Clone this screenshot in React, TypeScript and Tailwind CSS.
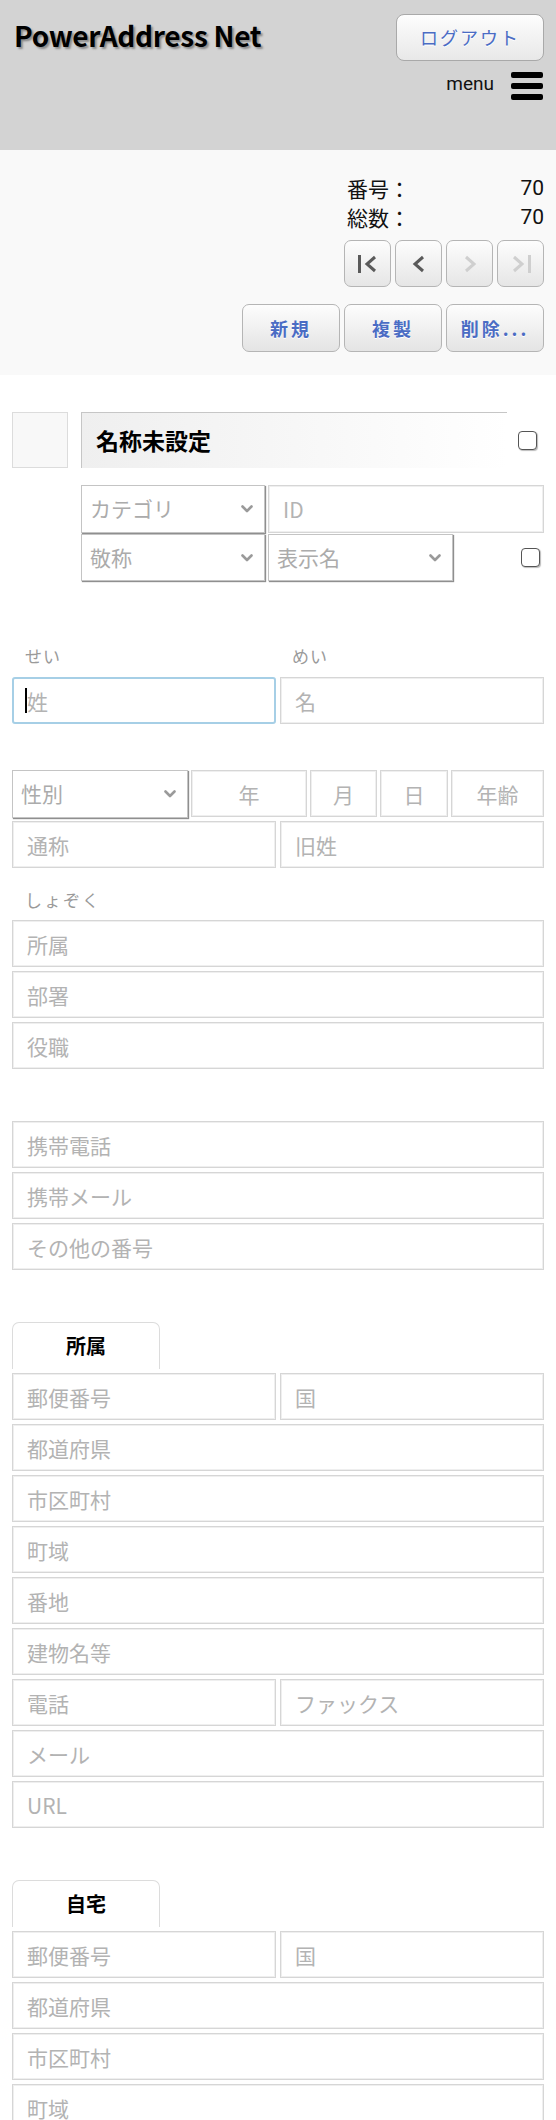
import React from "react";

const inputCls =
  "h-[47px] w-full border border-[#d6d6d6] shadow-[inset_0_0_0_1px_#efefef] bg-white px-[14px] text-[21px] text-[#333] placeholder:text-[#b3b3b3] outline-none";

function Field({ ph, center }: { ph: string; center?: boolean }) {
  return (
    <input
      placeholder={ph}
      className={center ? inputCls + " text-center px-1" : inputCls}
    />
  );
}

function Chevron() {
  return (
    <svg
      width="12"
      height="8"
      viewBox="0 0 12 8"
      className="pointer-events-none absolute right-[12px] top-1/2 -translate-y-1/2"
    >
      <polyline
        points="1.5,1.5 6,6 10.5,1.5"
        fill="none"
        stroke="#9a9a9a"
        strokeWidth="2.6"
        strokeLinecap="round"
        strokeLinejoin="round"
      />
    </svg>
  );
}

function Sel({ label, className }: { label: string; className: string }) {
  return (
    <div className={"relative " + className}>
      <select className="h-full w-full appearance-none border border-[#c4c4c4] bg-white pl-[8px] pr-8 text-[21px] text-[#ababab] shadow-[1px_1px_1px_#8f8f8f] outline-none">
        <option>{label}</option>
      </select>
      <Chevron />
    </div>
  );
}

function Check() {
  return (
    <div className="h-[19px] w-[19px] rounded-[4px] border-[1.5px] border-[#555] bg-white shadow-[1px_1px_1px_#bbb]" />
  );
}

function NavBtn({ kind, enabled }: { kind: "first" | "prev" | "next" | "last"; enabled: boolean }) {
  const c = enabled ? "#5a5a5a" : "#cfcfcf";
  return (
    <button className="flex h-[47px] w-[47px] items-center justify-center rounded-[7px] border border-[#b5b5b5] bg-gradient-to-b from-[#fdfdfd] to-[#e6e6e6]">
      <svg width="22" height="20" viewBox="0 0 22 20">
        {kind === "first" && (
          <>
            <rect x="1" y="1" width="3" height="18" fill={c} />
            <polyline points="18,3 10,10 18,17" fill="none" stroke={c} strokeWidth="3" />
          </>
        )}
        {kind === "prev" && (
          <polyline points="15,3 7,10 15,17" fill="none" stroke={c} strokeWidth="3" />
        )}
        {kind === "next" && (
          <polyline points="7,3 15,10 7,17" fill="none" stroke={c} strokeWidth="3" />
        )}
        {kind === "last" && (
          <>
            <polyline points="4,3 12,10 4,17" fill="none" stroke={c} strokeWidth="3" />
            <rect x="18" y="1" width="3" height="18" fill={c} />
          </>
        )}
      </svg>
    </button>
  );
}

function ActBtn({ label }: { label: string }) {
  return (
    <button className="h-[48px] w-[98px] rounded-[7px] border border-[#b5b5b5] bg-gradient-to-b from-[#fdfdfd] to-[#e4e4e4] text-[18px] font-bold tracking-[3px] text-[#4a6cc4] [text-shadow:0_1px_0_#fff]">
      {label}
    </button>
  );
}

function Tab({ label }: { label: string }) {
  return (
    <div className="flex h-[47px] w-[148px] items-center justify-center rounded-t-[7px] border border-b-0 border-[#dcdcdc] bg-white text-[20px] font-bold text-black">
      {label}
    </div>
  );
}

function AddressBlock({ title }: { title: string }) {
  return (
    <div className="flex flex-col">
      <Tab label={title} />
      <div className="mt-[4px] flex flex-col gap-[4px]">
        <div className="grid grid-cols-2 gap-[4px]">
          <Field ph="郵便番号" />
          <Field ph="国" />
        </div>
        <Field ph="都道府県" />
        <Field ph="市区町村" />
        <Field ph="町域" />
        <Field ph="番地" />
        <Field ph="建物名等" />
        <div className="grid grid-cols-2 gap-[4px]">
          <Field ph="電話" />
          <Field ph="ファックス" />
        </div>
        <Field ph="メール" />
        <Field ph="URL" />
      </div>
    </div>
  );
}

export default function App() {
  return (
    <div className="min-h-[2120px] bg-white font-['Noto_Sans_CJK_JP',sans-serif] text-black">
      {/* Header */}
      <header className="h-[150px] bg-[#d3d3d3] px-3 pt-[14px]">
        <div className="flex items-center justify-between">
          <h1 className="-mt-[6px] pl-[2px] text-[28px] font-bold leading-none tracking-[-0.3px] [text-shadow:2px_2px_2px_#8a8a8a]">
            PowerAddress Net
          </h1>
          <button className="h-[47px] w-[148px] rounded-[8px] border border-[#a9a9a9] bg-gradient-to-b from-[#fdfdfd] to-[#e8e8e8] text-[18px] tracking-[2px] text-[#4a6cc4] [text-shadow:0_1px_0_#fff]">
            ログアウト
          </button>
        </div>
        <div className="mt-[11px] flex items-center justify-end gap-[17px]">
          <span className="-mt-[3px] font-['Roboto',sans-serif] text-[19px] text-[#111]">menu</span>
          <div className="flex h-[28px] w-[33px] flex-col justify-between pr-[1px]">
            <span className="h-[6px] w-full rounded-[2px] bg-black" />
            <span className="h-[6px] w-full rounded-[2px] bg-black" />
            <span className="h-[6px] w-full rounded-[2px] bg-black" />
          </div>
        </div>
      </header>

      {/* Record navigation */}
      <section className="flex h-[225px] flex-col items-end bg-[#f9f9f9] px-3 pt-[24px]">
        <div className="grid w-[197px] grid-cols-[auto_1fr] text-[21px] leading-[29px] text-[#111]">
          <span>番号：</span>
          <span className="text-right font-['Roboto',sans-serif]">70</span>
          <span>総数：</span>
          <span className="text-right font-['Roboto',sans-serif]">70</span>
        </div>
        <div className="mt-[8px] flex gap-[4px]">
          <NavBtn kind="first" enabled />
          <NavBtn kind="prev" enabled />
          <NavBtn kind="next" enabled={false} />
          <NavBtn kind="last" enabled={false} />
        </div>
        <div className="mt-[17px] flex gap-[4px]">
          <ActBtn label="新規" />
          <ActBtn label="複製" />
          <ActBtn label="削除..." />
        </div>
      </section>

      {/* Main form */}
      <main className="px-3 pb-10">
        <div className="flex items-center pt-[37px]">
          <div className="h-[56px] w-[56px] shrink-0 border border-[#dcdcdc] bg-[#f8f8f8]" />
          <div className="ml-[13px] flex h-[56px] w-[426px] items-center border-l border-t border-[#c6c6c6] bg-gradient-to-r from-[#efefef] via-[#f7f7f7] to-white pl-[14px] text-[23px] font-bold">
            名称未設定
          </div>
          <div className="ml-[11px]">
            <Check />
          </div>
        </div>

        <div className="ml-[69px] mt-[17px] flex flex-col gap-[1px]">
          <div className="flex h-[48px] gap-[3px]">
            <Sel label="カテゴリ" className="w-[184px]" />
            <input
              placeholder="ID"
              className="h-[48px] flex-1 border border-[#d6d6d6] shadow-[inset_0_0_0_1px_#efefef] bg-white px-[14px] text-[21px] placeholder:text-[#b3b3b3] outline-none"
            />
          </div>
          <div className="flex h-[47px] items-center gap-[3px]">
            <Sel label="敬称" className="h-[47px] w-[184px]" />
            <Sel label="表示名" className="h-[47px] w-[185px]" />
            <div className="ml-[65px]">
              <Check />
            </div>
          </div>
        </div>

        {/* Name */}
        <div className="mt-[64px] grid grid-cols-2 gap-[4px] text-[17px] leading-[22px] tracking-[1px] text-[#9a9a9a]">
          <span className="pl-[13px]">せい</span>
          <span className="pl-[12px]">めい</span>
        </div>
        <div className="mt-[10px] grid grid-cols-2 gap-[4px]">
          <div className="relative">
            <input
              placeholder="姓"
              className="h-[47px] w-full rounded-[3px] border-2 border-[#a6cfe6] bg-white px-[13px] text-[21px] placeholder:text-[#b3b3b3] outline-none"
            />
            <span className="pointer-events-none absolute left-[13px] top-[11px] h-[25px] w-[1.5px] bg-black" />
          </div>
          <Field ph="名" />
        </div>

        <div className="mt-[46px] flex h-[48px] gap-[3px]">
          <Sel label="性別" className="w-[176px]" />
          <div className="w-[116px]">
            <Field ph="年" center />
          </div>
          <div className="w-[67px]">
            <Field ph="月" center />
          </div>
          <div className="w-[68px]">
            <Field ph="日" center />
          </div>
          <div className="flex-1">
            <Field ph="年齢" center />
          </div>
        </div>
        <div className="mt-[3px] grid grid-cols-2 gap-[4px]">
          <Field ph="通称" />
          <Field ph="旧姓" />
        </div>

        <div className="mt-[21px] pl-[13px] text-[17px] leading-[22px] tracking-[2px] text-[#9a9a9a]">しょぞく</div>
        <div className="mt-[9px] flex flex-col gap-[4px]">
          <Field ph="所属" />
          <Field ph="部署" />
          <Field ph="役職" />
        </div>

        <div className="mt-[52px] flex flex-col gap-[4px]">
          <Field ph="携帯電話" />
          <Field ph="携帯メール" />
          <Field ph="その他の番号" />
        </div>

        <div className="mt-[52px]">
          <AddressBlock title="所属" />
        </div>
        <div className="mt-[52px]">
          <AddressBlock title="自宅" />
        </div>
      </main>
    </div>
  );
}
